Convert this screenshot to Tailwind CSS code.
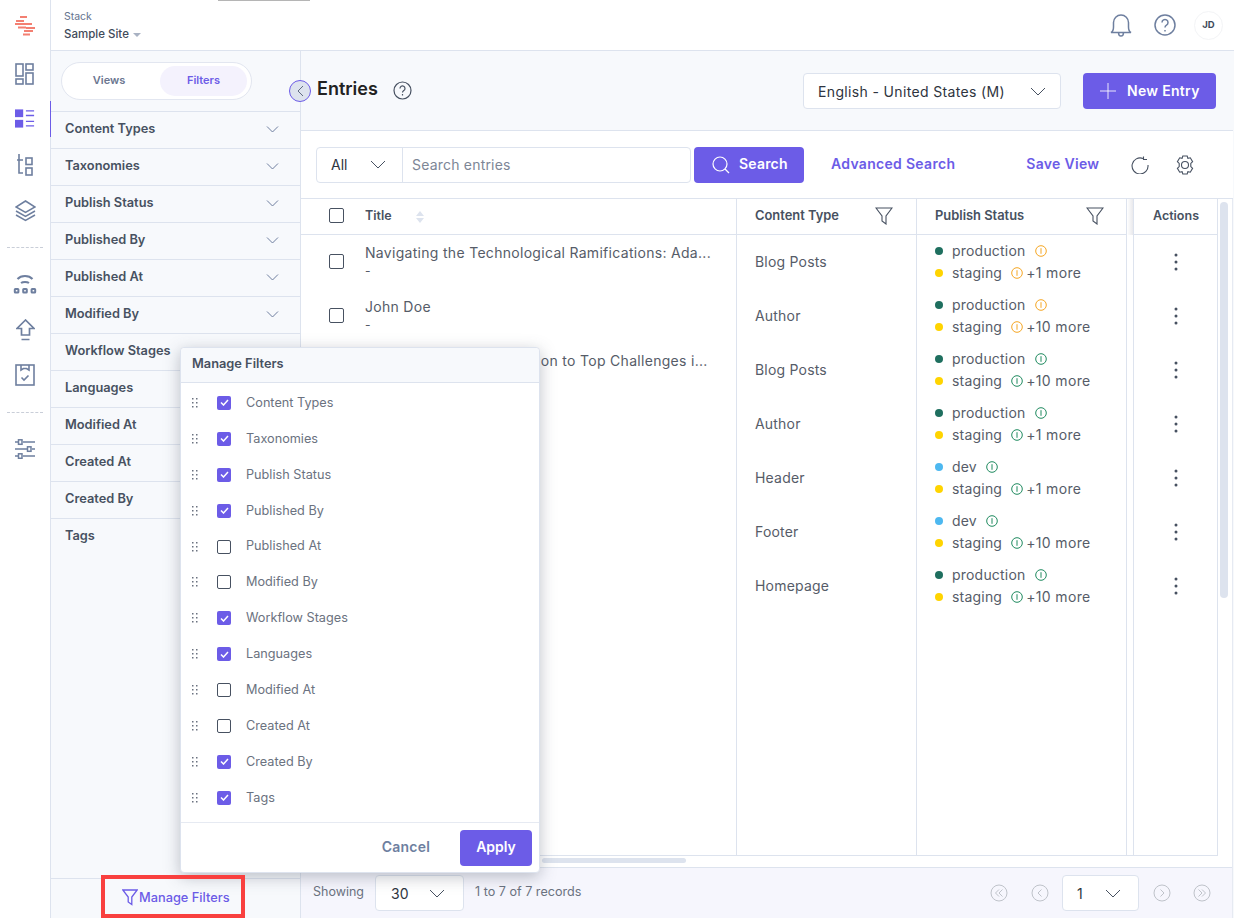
<!DOCTYPE html>
<html lang="en">
<head>
  <meta charset="UTF-8" />
  <title>Entries</title>
  <script src="https://cdn.jsdelivr.net/npm/@tailwindcss/browser@4"></script>
</head>
<body class="relative w-[1234px] h-[918px] overflow-hidden bg-white flex font-['Inter','Noto_Sans',sans-serif] text-[#475161]">

  <div class="absolute left-[218px] top-0 w-[92px] h-px bg-[#b5b5b5]"></div>

  <!-- Rail -->
  <nav class="w-[51px] shrink-0 h-full flex flex-col items-center border-r border-[#dde3ee] text-[#6e7f9f]">
    <div class="h-[51px] w-full flex items-center justify-center">
      <svg width="22" height="20" viewBox="0 0 22 20" fill="none" stroke="#f0604f" stroke-opacity=".8" stroke-width="2.200">
        <path d="M6 1h7M2 5h8M1 8h10M4 11.500h8M11 8h7M12 12h9M10 15h9M9 18.500h7" />
      </svg>
    </div>
    <div class="h-[45px] flex items-center">
      <svg width="20" height="22" viewBox="0 0 20 22" fill="none" stroke="currentColor" stroke-width="1.600">
        <rect x="1" y="1" width="7" height="12" /><rect x="11" y="1" width="7" height="6" /><rect x="1" y="16" width="7" height="5" /><rect x="11" y="10" width="7" height="11" />
      </svg>
    </div>
    <div class="relative h-[45px] w-full flex items-center justify-center">
      <svg width="20" height="19" viewBox="0 0 22 20" fill="#6c5ce7">
        <rect x="0" y="0" width="9" height="8.500" /><rect x="0" y="11.500" width="9" height="8.500" />
        <path d="M12 1h9v1.400h-9zM12 6h9v1.400h-9zM12 12.500h9v1.400h-9zM12 17.500h9v1.400h-9z" />
      </svg>
      <div class="absolute right-[-1px] top-[5px] h-[36px] w-px bg-[#6c5ce7]"></div>
    </div>
    <div class="h-[47px] flex items-center">
      <svg width="17" height="22" viewBox="0 0 17 22" fill="none" stroke="currentColor" stroke-width="1.600">
        <path d="M2 0v19h4M0 6h6" /><rect x="9" y="4" width="6" height="6.500" /><rect x="9" y="14" width="6" height="7" />
      </svg>
    </div>
    <div class="h-[46px] flex items-center">
      <svg width="21" height="22" viewBox="0 0 21 22" fill="none" stroke="currentColor" stroke-width="1.500">
        <path d="M10.500 1 20 7l-9.500 5.500L1 7zM1 11l9.500 5.500L20 11M1 15l9.500 5.500L20 15" />
      </svg>
    </div>
    <div class="h-[27px] flex items-center"><div class="w-9 border-t border-dashed border-[#c9ced8]"></div></div>
    <div class="h-[46px] flex items-center">
      <svg width="24" height="22" viewBox="0 0 24 22" fill="none" stroke="currentColor" stroke-width="2">
        <path d="M4.500 6C8 2 16 2 19.500 6M8 10c2-1.500 6-1.500 8 0" />
        <rect x="1.800" y="16" width="3.600" height="3.600" rx=".6" /><rect x="10.200" y="16" width="3.600" height="3.600" rx=".6" /><rect x="18.600" y="16" width="3.600" height="3.600" rx=".6" />
      </svg>
    </div>
    <div class="h-[46px] flex items-center">
      <svg width="19" height="22" viewBox="0 0 19 22" fill="none" stroke="currentColor" stroke-width="1.700">
        <path d="M9.500 1 1 9.500h4.500V16h8V9.500H18zM5.500 20.500h8" />
      </svg>
    </div>
    <div class="h-[44px] flex items-center">
      <svg width="20" height="22" viewBox="0 0 20 22" fill="none" stroke="currentColor" stroke-width="1.600">
        <rect x="1" y="1" width="18" height="20" /><path d="M6 1v5l2.500-1.500h3L14 6V1M6.500 13.500l2.500 2.500 4.500-4.500" />
      </svg>
    </div>
    <div class="h-[30px] flex items-center"><div class="w-9 border-t border-dashed border-[#c9ced8]"></div></div>
    <div class="h-[44px] flex items-center">
      <svg width="22" height="20" viewBox="0 0 22 20" fill="none" stroke="currentColor" stroke-width="1.500">
        <path d="M1 3h3M9 3h12M1 10h12M18 10h3M1 17h3M9 17h12" /><rect x="4.500" y="0.800" width="3.500" height="4.500" /><rect x="13.500" y="7.800" width="3.500" height="4.500" /><rect x="4.500" y="14.800" width="3.500" height="4.500" />
      </svg>
    </div>
  </nav>

  <div class="flex-1 min-w-0 flex flex-col">
    <!-- Top bar -->
    <header class="h-[51px] shrink-0 border-b border-[#dde3ee] flex items-center pl-[13px] pr-[11px]">
      <div class="flex-1">
        <div class="text-[10.5px] leading-[14px] text-[#64748f]">Stack</div>
        <div class="text-[11.5px] leading-[14px] mt-[3px] font-medium flex items-center text-[#3f4a5a]">Sample Site
          <span class="ml-[4px] mt-[3px] w-0 h-0 border-x-[4px] border-x-transparent border-t-[4px] border-t-[#a9b2c3]"></span>
        </div>
      </div>
      <svg class="mr-[22px] text-[#6e7f9f]" width="22" height="23" viewBox="0 0 22 23" fill="none" stroke="currentColor" stroke-width="1.500">
        <path d="M1 18.500c2-1 2.500-3 2.500-5.500V8.500a7.500 7.500 0 0 1 15 0V13c0 2.500.5 4.500 2.500 5.500zM8.500 18.500a2.500 3.500 0 0 0 5 0" />
      </svg>
      <svg class="mr-[18px] text-[#6e7f9f]" width="22" height="22" viewBox="0 0 22 22" fill="none" stroke="currentColor" stroke-width="1.500">
        <circle cx="11" cy="11" r="10" /><path d="M8 8.500a3 3 0 1 1 4.500 2.600c-1 .6-1.500 1.200-1.500 2.400" /><path d="M11 16v1.500" />
      </svg>
      <div class="w-[29px] h-[29px] rounded-full border border-[#f3f4f6] flex items-center justify-center text-[9.5px] font-bold text-[#3f4a5a]">JD</div>
    </header>

    <div class="flex-1 min-h-0 flex">
      <!-- Filter panel -->
      <aside class="w-[250px] shrink-0 bg-[#f7f9fc] border-r border-[#dde3ee] flex flex-col">
        <div class="h-[61px] shrink-0 border-b border-[#dde3ee] pl-[10px] pt-[11px]">
          <div class="w-[191px] h-[38px] rounded-full border border-[#e2e6f0] bg-white flex items-center p-[3px] text-[11px] font-semibold">
            <div class="w-[88px] text-center text-[#6b7690] mt-[-1px]">Views</div>
            <div class="ml-[7px] w-[87px] h-[30px] rounded-full bg-[#f4f2fd] text-[#6c5ce7] flex items-center justify-center pb-[2px]">Filters</div>
          </div>
        </div>
        <div id="filters" class="flex-1"></div>
        <div class="h-[40px] shrink-0 border-t border-[#dde3ee] pl-[71px] pb-[2px] flex items-center text-[12.8px] font-medium text-[#6c5ce7]">
          <svg class="mr-[1px]" width="16" height="17" viewBox="0 0 16 17" fill="none" stroke="currentColor" stroke-width="1.300"><path d="M.8 1h14.400L9.800 8v7.500L6.200 13V8z" /></svg>
          Manage Filters
        </div>
      </aside>

      <!-- Main -->
      <main class="flex-1 min-w-0 flex flex-col bg-[#f7f9fc] pr-[1px]">
        <div class="h-[80px] shrink-0 border-b border-[#dde3ee] flex items-center pl-[16px] pr-[17px]">
          <h1 class="text-[18px] font-semibold text-[#222222] mt-[-4px]">Entries</h1>
          <svg class="ml-[15px]" width="19" height="19" viewBox="0 0 19 19" fill="none" stroke="#475161" stroke-width="1.200">
            <circle cx="9.500" cy="9.500" r="8.500" /><path d="M7 7.500a2.500 2.500 0 1 1 3.800 2.100c-.9.600-1.300 1-1.300 2M9.500 13v1.400" />
          </svg>
          <div class="ml-auto w-[258px] h-[36px] rounded border border-[#dde3ee] bg-white flex items-center pl-[14px] pr-[14px] pt-[2px] text-[14px] text-[#2e3440] tracking-[.35px]">
            English - United States (M)
            <svg class="ml-auto" width="16" height="9" viewBox="0 0 16 9" fill="none" stroke="#475161"><path d="m1 1 7 7 7-7" /></svg>
          </div>
          <button class="ml-[22px] w-[133px] h-[36px] rounded bg-[#6c5ce7] text-white text-[14px] font-semibold flex items-center pl-[17px] tracking-[.3px]">
            <svg class="mr-[11px]" width="16" height="16" viewBox="0 0 16 16" stroke="white" stroke-opacity=".85"><path d="M8 0v16M0 8h16" /></svg>
            New Entry
          </button>
        </div>

        <div class="flex-1 min-h-0 bg-white flex flex-col">
          <div class="h-[68px] shrink-0 flex items-center pl-[15px] border-b border-[#dde3ee]">
            <div class="w-[375px] h-[36px] rounded border border-[#dde3ee] flex items-center text-[14px]">
              <div class="w-[86px] h-full border-r border-[#dde3ee] flex items-center pl-[14px] pr-[16px] text-[#2e3440]">
                All
                <svg class="ml-auto" width="16" height="9" viewBox="0 0 16 9" fill="none" stroke="#475161"><path d="m1 1 7 7 7-7" /></svg>
              </div>
              <span class="pl-[9px] text-[#7d8696] tracking-[.2px]">Search entries</span>
            </div>
            <button class="ml-[3px] w-[110px] h-[36px] rounded bg-[#6c5ce7] text-white text-[14px] font-semibold flex items-center pl-[18px] tracking-[.2px]">
              <svg class="mr-[9px]" width="18" height="18" viewBox="0 0 18 18" fill="none" stroke="white" stroke-width="1.200"><circle cx="8" cy="8" r="7" /><path d="m13 13 4 4" /></svg>
              <span class="mt-[-2px]">Search</span>
            </button>
            <span class="ml-[27px] mt-[-2px] text-[14px] font-semibold text-[#6c5ce7] tracking-[.3px]">Advanced Search</span>
            <span class="ml-[71px] mt-[-2px] text-[14px] font-semibold text-[#6c5ce7] tracking-[.3px]">Save View</span>
            <svg class="ml-[32px]" width="18" height="18" viewBox="0 0 18 18" fill="none" stroke="#475161" stroke-width="1.100"><path d="M12 2.500a8 8 0 1 0 5 6.500M12.500 .5V3.500H16" /></svg>
            <svg class="ml-[26px]" width="20" height="20" viewBox="0 0 20 20" fill="none" stroke="#475161" stroke-width="1.100">
              <path d="M7.800 1h4.400l.7 2.400 2.400-.6 2.300 3.800-1.800 1.800v3.200l1.800 1.800-2.300 3.800-2.400-.6-.7 2.400H7.800l-.7-2.400-2.400.6-2.300-3.800 1.800-1.800V8.400L2.400 6.600l2.300-3.800 2.400.6z" /><circle cx="10" cy="10" r="3.500" />
            </svg>
          </div>

          <!-- Table -->
          <div class="flex-1 min-h-0 flex flex-col relative">
            <div class="h-[657px] shrink-0 w-[917px] border-b border-r border-[#dde3ee] grid grid-cols-[436px_180px_210px_7px_84px] grid-rows-[36px_1fr]" id="table">
              <div class="border-b border-r border-[#dde3ee] flex items-center text-[12.5px] font-semibold">
                <span class="ml-[28px] w-[15px] h-[15px] rounded-[2px] border border-[#475161] mb-[2px]"></span>
                <span class="ml-[21px] mb-[1px]">Title</span>
                <svg class="ml-[24px]" width="8" height="12" viewBox="0 0 8 12" fill="#dde3ee"><path d="M4 0l4 5H0zM4 12l4-5H0z" /></svg>
              </div>
              <div class="border-b border-r border-[#dde3ee] flex items-center pl-[18px] pr-[23px] text-[12.9px] font-semibold pb-[2px]">
                Content Type
                <svg class="ml-auto" width="18" height="18" viewBox="0 0 18 18" fill="none" stroke="#475161" stroke-width="1.100"><path d="M1 1h16l-6 8v8l-4-3V9z" /></svg>
              </div>
              <div class="border-b border-r border-[#dde3ee] flex items-center pl-[18px] pr-[22px] text-[12.9px] font-semibold pb-[2px]">
                Publish Status
                <svg class="ml-auto" width="18" height="18" viewBox="0 0 18 18" fill="none" stroke="#475161" stroke-width="1.100"><path d="M1 1h16l-6 8v8l-4-3V9z" /></svg>
              </div>
              <div class="border-r border-[#dde3ee] bg-linear-to-r from-white to-[#e9e9ec]"></div>
              <div class="border-b border-[#dde3ee] flex items-center justify-center text-[12.5px] font-semibold pb-[1px]">Actions</div>
              <div id="col-title" class="border-r border-[#dde3ee]"></div>
              <div id="col-type" class="border-r border-[#dde3ee]"></div>
              <div id="col-status" class="border-r border-[#dde3ee]"></div>
              <div class="border-r border-[#dde3ee]"></div>
              <div id="col-actions"></div>
            </div>
            <div class="absolute left-[241px] top-[659px] w-[144px] h-[5px] rounded-full bg-[#dde3ee]"></div>
            <div class="absolute left-[919px] top-[3px] w-[8px] h-[396px] rounded-full bg-[#dde3ee]"></div>
            <div class="absolute right-0 top-0 bottom-0 w-px bg-[#e6eaf2]"></div>
            <!-- Pager -->
            <div class="mt-auto h-[51px] shrink-0 border-t border-[#dde3ee] bg-[#f6f6fd] flex items-center pl-[12px] text-[12.5px] text-[#6b7280]">
              <span class="mt-[-2px]">Showing</span>
              <div class="ml-[11px] w-[89px] h-[36px] rounded border border-[#dde3ee] bg-white flex items-center pl-[15px] pr-[18px] text-[14px] text-[#2e3440]">30
                <svg class="ml-auto" width="16" height="9" viewBox="0 0 16 9" fill="none" stroke="#475161"><path d="m1 1 7 7 7-7" /></svg>
              </div>
              <span class="ml-[11px] mt-[-2px] text-[12.6px]">1 to 7 of 7 records</span>
              <svg class="ml-auto" width="18" height="18" viewBox="0 0 18 18" fill="none" stroke="#bfc3ca"><circle cx="9" cy="9" r="8" /><path d="M9 5.500 5.500 9 9 12.500M12.500 5.500 9 9l3.500 3.500" /></svg>
              <svg class="ml-[23px]" width="18" height="18" viewBox="0 0 18 18" fill="none" stroke="#bfc3ca"><circle cx="9" cy="9" r="8" /><path d="M10.500 5.500 7 9l3.500 3.500" /></svg>
              <div class="ml-[13px] w-[77px] h-[36px] rounded border border-[#dde3ee] bg-white flex items-center pl-[14px] pr-[17px] text-[14px] text-[#2e3440]">1
                <svg class="ml-auto" width="16" height="9" viewBox="0 0 16 9" fill="none" stroke="#475161"><path d="m1 1 7 7 7-7" /></svg>
              </div>
              <svg class="ml-[14px]" width="18" height="18" viewBox="0 0 18 18" fill="none" stroke="#bfc3ca"><circle cx="9" cy="9" r="8" /><path d="M7.500 5.500 11 9l-3.500 3.500" /></svg>
              <svg class="ml-[22px] mr-[22px]" width="18" height="18" viewBox="0 0 18 18" fill="none" stroke="#bfc3ca"><circle cx="9" cy="9" r="8" /><path d="M5.500 5.500 9 9l-3.500 3.500M9 5.500 12.500 9 9 12.500" /></svg>
            </div>
          </div>
        </div>
      </main>
    </div>
  </div>

  <!-- Collapse handle -->
  <div class="absolute left-[289px] top-[80px] w-[22px] h-[22px] rounded-full border border-[#6c5ce7] bg-[#dde3ee] flex items-center justify-center">
    <svg width="7" height="12" viewBox="0 0 7 12" fill="none" stroke="#5f6b80"><path d="M6 1 1 6l5 5" /></svg>
  </div>

  <!-- Manage filters popup -->
  <div class="absolute left-[180px] top-[347px] w-[360px] h-[526px] rounded bg-white border border-[#dde3ee] shadow-[0_4px_16px_rgba(71,81,97,.35)] flex flex-col">
    <div class="h-[35px] shrink-0 bg-[#f7f9fc] border-b border-[#dde3ee] flex items-center pl-[11px] pb-[2px] text-[12.8px] font-semibold rounded-t">Manage Filters</div>
    <div id="manage" class="pt-[2px] h-[439px] shrink-0"></div>
    <div class="flex-1 border-t border-[#e6eaf2] flex items-center justify-end pr-[7px] text-[14px] font-semibold">
      <span class="text-[#6e7f9f] mr-[30px] tracking-[.2px] mt-[-2px]">Cancel</span>
      <button class="w-[72px] h-[36px] rounded bg-[#6c5ce7] text-white pb-[2px]">Apply</button>
    </div>
  </div>

  <!-- Highlight box -->
  <div class="absolute left-[101px] top-[875px] w-[144px] h-[43px] border-[4px] border-[#f9403f]"></div>

  <script>
    const chevron = '<svg class="ml-auto" width="13" height="7" viewBox="0 0 13 7" fill="none" stroke="#6e7f9f"><path d="m1 .5 5.500 5.500L12 .5" /></svg>';
    const filters = ['Content Types', 'Taxonomies', 'Publish Status', 'Published By', 'Published At', 'Modified By', 'Workflow Stages', 'Languages', 'Modified At', 'Created At', 'Created By', 'Tags'];
    document.getElementById('filters').innerHTML = filters.map((f, i) =>
      `<div class="h-[37px] border-b ${i < 11 ? 'border-[#dde3ee]' : 'border-transparent'} flex items-center pl-[14px] pr-[21px] pb-[2px] text-[12.8px] font-semibold">${f}${chevron}</div>`).join('');

    const checked = [1, 1, 1, 1, 0, 0, 1, 1, 0, 0, 1, 1];
    const dots = '<svg class="ml-[11px]" width="6" height="10" viewBox="0 0 6 10" fill="#6b7280"><path d="M0 0h1.500v1.500H0zM4 0h1.500v1.500H4zM0 4h1.500v1.500H0zM4 4h1.500v1.500H4zM0 8h1.500v1.500H0zM4 8h1.500v1.500H4z" /></svg>';
    document.getElementById('manage').innerHTML = filters.map((f, i) => {
      const box = checked[i]
        ? '<span class="ml-[19px] w-[14px] h-[14px] rounded-[2px] bg-[#6c5ce7] flex items-center justify-center"><svg width="9" height="7" viewBox="0 0 9 7" fill="none" stroke="white" stroke-width="1.500"><path d="m1 3.500 2.500 2.500L8 1" /></svg></span>'
        : '<span class="ml-[19px] w-[14px] h-[14px] rounded-[2px] border border-[#475161]"></span>';
      return `<div class="h-[35.900px] flex items-center text-[12.7px] text-[#6b7280]">${dots}${box}<span class="ml-[15px] mt-[-1px]">${f}</span></div>`;
    }).join('');

    const rows = [
      ['Navigating the Technological Ramifications: Ada...', 'Blog Posts', 'production', 'staging', '#f5a623', '+1 more'],
      ['John Doe', 'Author', 'production', 'staging', '#f5a623', '+10 more'],
      ['An Inventive Digital Solution to Top Challenges i...', 'Blog Posts', 'production', 'staging', '#1f8a5f', '+10 more'],
      ['Jane Doe', 'Author', 'production', 'staging', '#1f8a5f', '+1 more'],
      ['Header', 'Header', 'dev', 'staging', '#1f8a5f', '+1 more'],
      ['Footer', 'Footer', 'dev', 'staging', '#1f8a5f', '+10 more'],
      ['Homepage', 'Homepage', 'production', 'staging', '#1f8a5f', '+10 more'],
    ];
    const info = c => `<svg width="12" height="12" viewBox="0 0 12 12" fill="none" stroke="${c}"><circle cx="6" cy="6" r="5.300" /><path d="M6 3.200v5.600" /></svg>`;
    document.getElementById('col-title').innerHTML = rows.map(r =>
      `<div class="h-[54px] flex items-center pb-[2px]"><span class="ml-[28px] w-[15px] h-[15px] rounded-[2px] border border-[#475161] shrink-0"></span>
        <div class="ml-[21px] w-[350px] mt-[-1px]"><div class="whitespace-nowrap text-[14px] leading-[20px] text-[#565c68] tracking-[.3px]">${r[0]}</div><div class="text-[12px] leading-[14px] text-[#565c68] mt-[1px]">-</div></div></div>`).join('');
    document.getElementById('col-type').innerHTML = rows.map(r =>
      `<div class="h-[54px] flex items-center pl-[18px] pb-[2px] text-[14px] text-[#565c68] tracking-[.2px]">${r[1]}</div>`).join('');
    document.getElementById('col-status').innerHTML = rows.map(r => {
      const dot = r[2] === 'dev' ? 'bg-[#4db8f0]' : 'bg-[#1f6f5f]';
      return `<div class="h-[54px] pl-[18px] pt-[5px] text-[14px] leading-[22px] text-[#565c68] tracking-[.2px]">
        <div class="flex items-center"><span class="w-[8px] h-[8px] rounded-full ${dot}"></span><span class="ml-[9px] mr-[9px]">${r[2]}</span>${info(r[4])}</div>
        <div class="flex items-center"><span class="w-[8px] h-[8px] rounded-full bg-[#ffd400]"></span><span class="ml-[9px] mr-[9px]">${r[3]}</span>${info(r[4])}<span class="ml-[3px] tracking-[.35px]">${r[5]}</span></div></div>`;
    }).join('');
    document.getElementById('col-actions').innerHTML = rows.map(() =>
      '<div class="h-[54px] flex items-center justify-center"><svg width="4" height="18" viewBox="0 0 4 18" fill="#475161"><circle cx="2" cy="2" r="1.500" /><circle cx="2" cy="9" r="1.500" /><circle cx="2" cy="16" r="1.500" /></svg></div>').join('');
  </script>
</body>
</html>
